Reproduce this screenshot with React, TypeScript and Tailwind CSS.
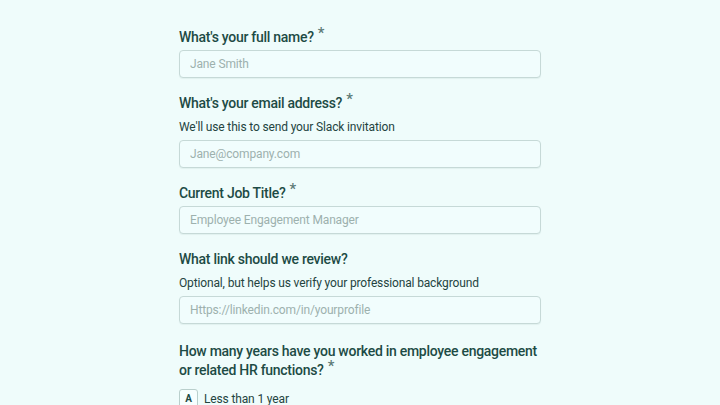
import React from 'react';

const font = { fontFamily: 'Roboto, "Noto Sans", sans-serif' };

const Star = () => (
  <span className="ml-[4px] relative top-[-4px] text-[15px] text-[#5d7b77]">*</span>
);

type FieldProps = {
  label: string;
  required?: boolean;
  hint?: string;
  placeholder: string;
};

const Field: React.FC<FieldProps> = ({ label, required, hint, placeholder }) => (
  <div className="flex flex-col">
    <label className="text-[14px] leading-[20px] font-medium tracking-[-0.02em] text-[#1d4b45]">
      {label}
      {required && <Star />}
    </label>
    {hint && (
      <p className="mt-[4px] text-[12px] leading-[20px] tracking-[-0.012em] text-[#24443f]">{hint}</p>
    )}
    <input
      className="mt-[3px] h-[28px] w-full rounded-[4px] border border-[#c6d9d7] bg-[#f1fdfd] px-[10px] text-[12px] tracking-[-0.012em] text-[#1d4b45] placeholder:text-[#9db1ae] shadow-[0_1px_1px_rgba(0,60,50,0.06)] outline-none"
      placeholder={placeholder}
    />
  </div>
);

export default function App() {
  return (
    <div className="min-h-screen w-full bg-[#effcfb]" style={font}>
      <div className="mx-auto w-[362px] pt-[27px] flex flex-col gap-[15px]">
        <Field label="What's your full name?" required placeholder="Jane Smith" />
        <Field
          label="What's your email address?"
          required
          hint="We'll use this to send your Slack invitation"
          placeholder="Jane@company.com"
        />
        <Field label="Current Job Title?" required placeholder="Employee Engagement Manager" />
        <Field
          label="What link should we review?"
          hint="Optional, but helps us verify your professional background"
          placeholder="Https://linkedin.com/in/yourprofile"
        />
        <div className="flex flex-col">
          <p className="mt-[3px] text-[14px] leading-[18.5px] font-medium tracking-[-0.02em] text-[#1d4b45]">
            How many years have you worked in employee engagement or related HR functions?
            <Star />
          </p>
          <div className="mt-[10px] flex flex-col gap-[6px]">
            {['Less than 1 year', '1-3 years', '3-5 years'].map((opt, i) => (
              <div key={opt} className="flex items-center gap-[6px]">
                <span className="flex h-[19px] w-[19px] items-center justify-center rounded-[3px] border border-[#b9cfcc] bg-[#f7fefe] text-[10px] font-bold text-[#1d4b45]">
                  {String.fromCharCode(65 + i)}
                </span>
                <span className="text-[12px] tracking-[-0.012em] text-[#24443f]">{opt}</span>
              </div>
            ))}
          </div>
        </div>
      </div>
    </div>
  );
}
